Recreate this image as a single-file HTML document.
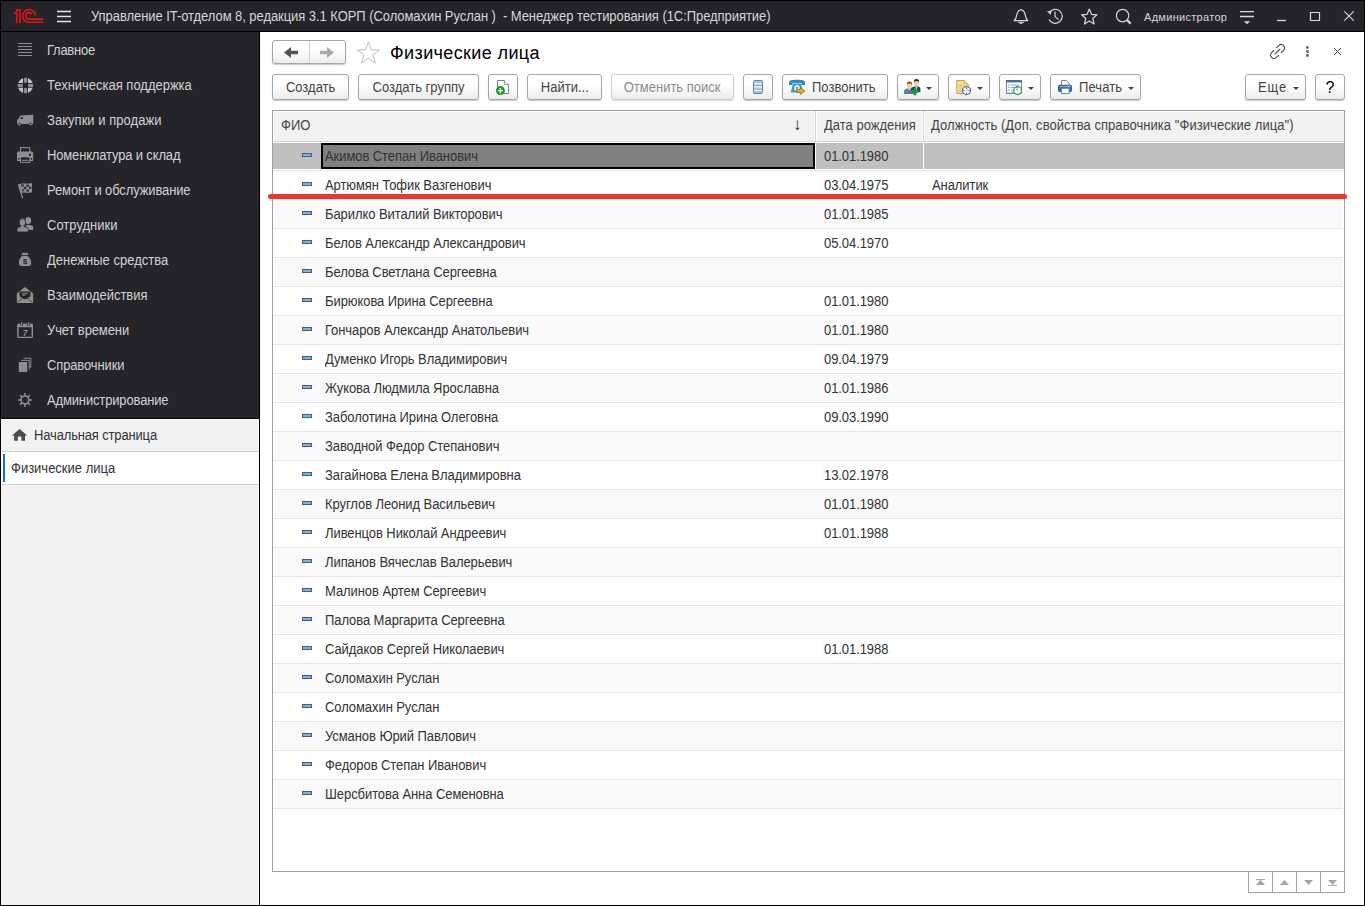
<!DOCTYPE html><html lang="ru"><head><meta charset="utf-8"><title>Физические лица</title><style>*,*::before,*::after{box-sizing:border-box;margin:0;padding:0}
html,body{width:1365px;height:906px;overflow:hidden;background:#fff}
body{font-family:"Liberation Sans",sans-serif;font-size:13px;color:#333;position:relative}
#win{position:absolute;left:0;top:0;width:1365px;height:906px;overflow:hidden}
#win::after{content:"";box-sizing:border-box;position:absolute;left:0;top:0;width:1365px;height:906px;border:1px solid #000;z-index:10}
#win>*{position:absolute}
svg{position:absolute;overflow:visible}
#tb{left:0;top:0;width:1365px;height:32px;background:#242429;border-bottom:1px solid #000;color:#d6d6d6}
#tb span{position:absolute;white-space:pre}
#tb .tt{left:91px;top:8px;font-size:14px;line-height:16px;letter-spacing:-0.065px;transform:scaleX(.9286);transform-origin:0 0}
#tb .adm{left:1144px;top:10px;font-size:11px;line-height:14px;letter-spacing:0.3px}
#sb{left:0;top:32px;width:260px;height:387px;background:#242429;border-right:1px solid #000;border-bottom:1px solid #000}
.mi{position:absolute;left:0;width:259px;height:35px;color:#d2d2d2}
.mi span{position:absolute;left:47px;top:10px;line-height:16px;font-size:14px;white-space:pre;letter-spacing:-0.05px;transform:scaleX(.9286);transform-origin:0 0}
#ow{left:0;top:419px;width:260px;height:487px;background:#f2f2f2;border-right:1px solid #000;box-shadow:inset -1px 1px 0 #fff}
#ow div{position:absolute;left:0;width:259px;height:33px;border-bottom:1px solid #d4d4d4}
#ow .o1{top:0}
#ow .o2{top:33px;background:#fff}
#ow span{position:absolute;top:8px;font-size:14px;line-height:16px;white-space:pre;color:#333;transform:scaleX(.9286);transform-origin:0 0}
#ow .o1 span{left:34px;letter-spacing:-0.17px}
#ow .o2 span{left:11px}
#ow .o2 i{position:absolute;left:3px;top:2px;width:2px;height:28px;background:#1976d2}
#ct{left:0;top:0;width:1365px;height:906px}
#ct>*{position:absolute}
.nav{left:272px;top:40px;width:74px;height:24px;border:1px solid #a6a6a6;border-radius:3px;background:linear-gradient(#fff 40%,#ececec);box-shadow:0 1px 1px rgba(0,0,0,.22)}
.nb{position:absolute;top:0;height:22px}
.nb.l{left:0;width:37px;border-right:1px solid #d0d0d0}
.nb.r{left:37px;width:35px}
h1{left:390px;top:42px;font-size:18px;line-height:22px;font-weight:normal;color:#000;white-space:pre;letter-spacing:0.38px}
.btn{top:74px;height:26px;border:1px solid #a6a6a6;border-radius:3px;background:linear-gradient(#fff 40%,#ececec);box-shadow:0 1px 1px rgba(0,0,0,.22);color:#444;white-space:pre;text-align:center}
.btn span{position:relative;display:inline-block;top:0;line-height:24px;font-size:14px;transform:scaleX(.9286)}
.btn.dis{border-color:#cdcdcd;color:#8c8c8c;box-shadow:0 1px 1px rgba(0,0,0,.14)}
.btn .dd{position:absolute;right:6px;top:12px;width:0;height:0;border-left:3.3px solid transparent;border-right:3.3px solid transparent;border-top:3.4px solid #444}
.btn .q{font-size:16px;color:#000;transform:none;top:1px}
#tbl{left:272px;top:110px;width:1073px;height:762px;border:1px solid #a0a0a0;background:#fff;overflow:hidden}
.th{position:absolute;left:0;top:0;width:1071px;height:31px;background:#f2f2f2;border-bottom:1px solid #d6d6d6;color:#444;box-shadow:inset 1px 1px 0 #fff}
.th span{position:absolute;top:6px;font-size:14px;line-height:16px;white-space:pre;transform:scaleX(.9286);transform-origin:0 0}
.th i{position:absolute;top:0;height:30px;width:3px;background:linear-gradient(90deg,#fff 1px,#d8d8d8 1px,#d8d8d8 2px,#fff 2px)}
.tr{position:absolute;left:0;width:1070px;height:29px;border-bottom:1px solid #e5e5e5}
.tr.alt{background:#fafafa}
.tr.sel::before{content:"";position:absolute;left:0;top:1px;width:1071px;height:26px;background:linear-gradient(90deg,#c0c0c0 542px,#fff 542px,#fff 543.2px,#c0c0c0 543.2px,#c0c0c0 650px,#fff 650px,#fff 651.4px,#c0c0c0 651.4px)}
.tr span{position:absolute;top:6px;font-size:14px;line-height:16px;white-space:pre;color:#333;letter-spacing:-0.08px;transform:scaleX(.9286);transform-origin:0 0}
.tr .c1{left:52px}
.tr .c2{left:551px}
.tr .c3{left:659px}
.tr .ic{position:absolute;left:29px;top:11px;width:10px;height:4px;background:#86b0d6;border:1px solid #3a6088}
.tr .bx{position:absolute;left:48px;top:1px;width:494px;height:26px;border:2px solid #000;background:#808080}
#scr{left:1248px;top:871px;width:97px;height:22px;border:1px solid #a0a0a0;background:#fff}
#red{left:268px;top:194px;width:1079px;height:5px;border-radius:3px;background:#e5392f}
.th .sa{font-size:17px;top:6px;color:#222;font-weight:bold;transform:none}
</style></head><body>
<div id="win">
<div id="tb"><svg style="left:0;top:0" width="80" height="32" viewBox="0 0 80 32"><g fill="none" stroke="#e3131b" stroke-width="1.7"><path d="M35.33 15.35A6.35 6.35 0 1 0 29 22.25H43.2"/><path d="M31.83 14.4A3.2 3.2 0 1 0 29 19.1H43.2"/><path d="M16.75 9.2V23.2M20 9.2V23.2" stroke-width="1.6"/><path d="M13.9 13.2H16.8"/><path d="M16 9.7H20.8" stroke-width="1.4"/></g></svg><svg style="left:0;top:0" width="80" height="32" viewBox="0 0 80 32"><g stroke="#e2e2e2" stroke-width="1.4"><path d="M57 11.5H71M57 16.5H71M57 21.5H71"/></g></svg><span class="tt">Управление IT-отделом 8, редакция 3.1 КОРП (Соломахин Руслан )&nbsp; - Менеджер тестирования (1С:Предприятие)</span><svg style="left:1000px;top:0" width="365" height="32" viewBox="1000 0 365 32"><g fill="none" stroke="#d9d9d9" stroke-width="1.2" stroke-linejoin="round">
<path d="M1014.2 20.6H1027.8C1025 18.5 1025.6 14.5 1024.4 12.3C1023.6 10.8 1022.6 10.2 1021.8 10.1A0.9 0.9 0 0 0 1020.2 10.1C1019.4 10.2 1018.4 10.8 1017.6 12.3C1016.4 14.5 1017 18.5 1014.2 20.6Z"/>
<path d="M1018.2 22.3H1023.8L1021 23.8Z" fill="#d9d9d9" stroke-width="0.6"/>
<path d="M1049.3 12.6A7 7 0 1 1 1049 19.4"/><path d="M1047 11.3L1050.6 14.8L1051.6 10.8Z" fill="#d9d9d9" stroke="none"/><path d="M1055 11.5V16.6L1058.6 19.6"/>
<path d="M1089.3 9L1091.5 14.3L1097 14.8L1092.8 18.5L1094.1 24L1089.3 21L1084.5 24L1085.8 18.5L1081.6 14.8L1087.1 14.3Z"/>
<circle cx="1122.6" cy="15.6" r="6.2"/><path d="M1127.2 20.2L1130.6 23.6" stroke-width="2.2"/>
<path d="M1240 11.6H1254M1240 16.5H1254" stroke-width="1.3"/><path d="M1243.8 21.2H1250.2L1247 24.2Z" fill="#d9d9d9" stroke="none"/>
<path d="M1277 20.5H1286" stroke-width="1.3"/>
<rect x="1310.5" y="12.5" width="9" height="8"/>
<path d="M1344.3 11.3L1353.7 20.7M1353.7 11.3L1344.3 20.7"/>
</g></svg><span class="adm">Администратор</span></div>
<div id="sb">
<div class="mi" style="top:0px"><svg style="left:17px;top:9px" width="17" height="17" viewBox="0 0 17 17"><g fill="#8e8e8e"><rect x="1" y="2" width="14" height="1"/><rect x="1" y="5" width="14" height="1"/><rect x="1" y="8" width="14" height="1"/><rect x="1" y="11" width="14" height="1"/><rect x="1" y="14" width="14" height="1"/></g></svg><span style="letter-spacing:-0.28px">Главное</span></div>
<div class="mi" style="top:35px"><svg style="left:17px;top:9px" width="17" height="17" viewBox="0 0 17 17"><circle cx="8.45" cy="9.45" r="5.25" fill="none" stroke="#c2c2c2" stroke-width="4.9"/><path d="M8.45 1.5V17.4M0.5 9.45H16.4" stroke="#242429" stroke-width="4.8"/><g fill="#8e8e8e"><rect x="6.95" y="1.8" width="3" height="4.9"/><rect x="6.95" y="12.2" width="3" height="4.9"/><rect x="0.8" y="7.95" width="4.9" height="3"/><rect x="11.2" y="7.95" width="4.9" height="3"/></g></svg><span style="letter-spacing:-0.01px">Техническая поддержка</span></div>
<div class="mi" style="top:70px"><svg style="left:17px;top:9px" width="17" height="17" viewBox="0 0 17 17"><path fill="#8f8f8f" d="M0 13V9.4L3.6 4.6L16.2 3.8V13Z"/><path fill="#242429" d="M2.7 7.8L4.3 5.9H6V7.8Z"/><circle cx="2.4" cy="13.3" r="1.5" fill="#8f8f8f" stroke="#242429" stroke-width="0.7"/><circle cx="13.5" cy="13.3" r="1.5" fill="#8f8f8f" stroke="#242429" stroke-width="0.7"/></svg><span style="letter-spacing:0.04px">Закупки и продажи</span></div>
<div class="mi" style="top:105px"><svg style="left:17px;top:9px" width="17" height="17" viewBox="0 0 17 17"><rect x="3.5" y="1.6" width="9.3" height="5" fill="none" stroke="#8f8f8f" stroke-width="1.1"/><path fill="#8f8f8f" d="M1 5.4H15L16.2 6.6V15H0V6.6Z"/><rect x="2.9" y="10.6" width="10.5" height="6.2" fill="#8f8f8f"/><rect x="4" y="11.4" width="8.3" height="4.4" fill="#242429"/><rect x="5" y="13.8" width="6.4" height="1" fill="#8f8f8f"/><rect x="11.9" y="7.9" width="2" height="2" fill="#242429"/><rect x="1" y="12.1" width="1.6" height="1.6" fill="#242429"/><rect x="13.6" y="12.1" width="1.6" height="1.6" fill="#242429"/></svg><span style="letter-spacing:-0.17px">Номенклатура и склад</span></div>
<div class="mi" style="top:140px"><svg style="left:17px;top:9px" width="17" height="17" viewBox="0 0 17 17"><path d="M1.3 3.2L5.6 17" stroke="#8f8f8f" stroke-width="1.2" fill="none"/><path fill="#8f8f8f" d="M1.8 3.4C5 1.2 9 3.6 15 1.9V11.2C10 13 6.5 10.2 4.4 12.2Z"/><g fill="#242429" opacity="0.8"><rect x="4.2" y="3.3" width="2.6" height="2.4"/><rect x="9.4" y="3.6" width="2.6" height="2.4"/><rect x="6.8" y="5.8" width="2.6" height="2.4"/><rect x="12" y="5.6" width="2.4" height="2.4"/><rect x="5" y="8.2" width="2.2" height="2"/><rect x="9.4" y="8.4" width="2.6" height="2.4"/></g></svg><span style="letter-spacing:-0.13px">Ремонт и обслуживание</span></div>
<div class="mi" style="top:175px"><svg style="left:17px;top:9px" width="17" height="17" viewBox="0 0 17 17"><g fill="#8f8f8f"><ellipse cx="11.2" cy="4.5" rx="2.9" ry="3.6"/><path d="M9 14V10.6C9 9.4 10.2 8.8 11.2 8.8C13.8 8.8 16.2 9.6 16.2 11.4V14Z"/><g stroke="#242429" stroke-width="0.8"><ellipse cx="5.4" cy="6.4" rx="3.2" ry="3.9"/><path d="M0 16V13.4C0 11.6 2.6 10.8 4.2 10.6H6.8C8.6 10.8 11.4 11.6 11.4 13.4V16Z"/></g><rect x="4.1" y="9.6" width="2.7" height="2"/></g></svg><span style="letter-spacing:0.01px">Сотрудники</span></div>
<div class="mi" style="top:210px"><svg style="left:17px;top:9px" width="17" height="17" viewBox="0 0 17 17"><rect x="4.9" y="1.9" width="6.2" height="2" fill="#8f8f8f"/><path fill="#8f8f8f" d="M5.8 4.8H10.3C12.6 6.2 14.2 8.8 14.2 11.8C14.2 13.8 13.4 15 11.8 15H4.2C2.6 15 1.8 13.8 1.8 11.8C1.8 8.8 3.4 6 5.3 4.4Z"/><text x="8" y="13.2" font-family="Liberation Sans,sans-serif" font-size="7.5" font-weight="bold" text-anchor="middle" fill="#242429">$</text></svg><span style="letter-spacing:0.01px">Денежные средства</span></div>
<div class="mi" style="top:245px"><svg style="left:17px;top:9px" width="17" height="17" viewBox="0 0 17 17"><path fill="#8f8f8f" d="M-0.2 7.4L8 1L16.2 7.4V16.2C16.2 16.7 15.9 17 15.4 17H0.6C0.1 17-0.2 16.7-0.2 16.2Z"/><path fill="#242429" d="M2.6 5.6H13.4V10.6L8 13.6L2.6 10.6Z"/><rect x="5" y="6.8" width="6" height="1" fill="#8f8f8f"/><rect x="5" y="8.6" width="3.6" height="1" fill="#8f8f8f"/><path d="M0.6 16.2L6.6 11.8M15.4 16.2L9.4 11.8" stroke="#242429" stroke-width="0.7" fill="none"/></svg><span style="letter-spacing:-0.02px">Взаимодействия</span></div>
<div class="mi" style="top:280px"><svg style="left:17px;top:9px" width="17" height="17" viewBox="0 0 17 17"><rect x="0.9" y="3.2" width="14.4" height="13.2" rx="1" fill="none" stroke="#8f8f8f" stroke-width="1.4"/><rect x="0.9" y="3.2" width="14.4" height="3" fill="#8f8f8f"/><path d="M4.6 1.2V4.8M11.6 1.2V4.8" stroke="#242429" stroke-width="2.6"/><path d="M4.6 1.2V4.6M11.6 1.2V4.6" stroke="#8f8f8f" stroke-width="1.2"/><text x="8.1" y="14.8" font-family="Liberation Sans,sans-serif" font-size="8.5" font-weight="bold" font-style="italic" text-anchor="middle" fill="#8f8f8f">7</text></svg><span style="letter-spacing:-0.12px">Учет времени</span></div>
<div class="mi" style="top:315px"><svg style="left:17px;top:9px" width="17" height="17" viewBox="0 0 17 17"><rect x="1.8" y="6" width="8.4" height="10" fill="#8f8f8f"/><path d="M4.2 4.4H12.2V13.6M6.4 2.2H13.8V11.8" fill="none" stroke="#8f8f8f" stroke-width="1"/></svg><span style="letter-spacing:-0.14px">Справочники</span></div>
<div class="mi" style="top:350px"><svg style="left:17px;top:9px" width="17" height="17" viewBox="0 0 17 17"><circle cx="7.9" cy="8.9" r="3.9" fill="none" stroke="#8f8f8f" stroke-width="1.7"/><path d="M12.10 8.90L14.90 8.90M10.87 11.87L12.85 13.85M7.90 13.10L7.90 15.90M4.93 11.87L2.95 13.85M3.70 8.90L0.90 8.90M4.93 5.93L2.95 3.95M7.90 4.70L7.90 1.90M10.87 5.93L12.85 3.95" stroke="#8f8f8f" stroke-width="1.5"/></svg><span style="letter-spacing:-0.16px">Администрирование</span></div>
</div>
<div id="ow"><div class="o1"><svg style="left:12px;top:10px" width="16" height="13" viewBox="0 0 16 13"><path fill="#4a4a4a" d="M7.6 0L15.2 6.6H13V11.8H9.4V7.6H5.8V11.8H2.2V6.6H0Z"/></svg><span>Начальная страница</span></div><div class="o2"><i></i><span>Физические лица</span></div></div>
<div id="ct">
<div class="nav"><div class="nb l"></div><div class="nb r"></div></div>
<svg style="left:280px;top:44px" width="24" height="18" viewBox="280 44 24 18"><path fill="#555" d="M284 52.5L291 47V50.8H298V54.2H291V58Z"/></svg><svg style="left:316px;top:44px" width="24" height="18" viewBox="316 44 24 18"><path fill="#a8a8a8" d="M334 52.5L327 47V50.8H320V54.2H327V58Z"/></svg>
<svg style="left:355px;top:40px" width="28" height="26" viewBox="355 40 28 26"><path fill="none" stroke="#b4c0ca" stroke-width="1" stroke-linejoin="miter" d="M368.40 41.80L371.16 49.80L379.62 49.95L372.87 55.05L375.34 63.15L368.40 58.30L361.46 63.15L363.93 55.05L357.18 49.95L365.64 49.80Z"/></svg>
<h1>Физические лица</h1>
<svg style="left:1265px;top:40px" width="85" height="24" viewBox="1265 40 85 24"><g transform="translate(1277.5 51.5) rotate(-45)" fill="none" stroke="#555" stroke-width="1.2" stroke-linecap="round"><path d="M2 -3.4H5A3.4 3.4 0 0 1 5 3.4H2M-2 -3.4H-5A3.4 3.4 0 0 0 -5 3.4H-2M-3.2 0H3.3"/></g><g fill="#666"><circle cx="1307.4" cy="47.5" r="1.45"/><circle cx="1307.4" cy="51.5" r="1.45"/><circle cx="1307.4" cy="55.5" r="1.45"/></g><path d="M1334 48L1341 55M1341 48L1334 55" stroke="#444" stroke-width="0.95" fill="none"/></svg>
<div class="btn " style="left:272px;width:77px"><span>Создать</span></div>
<div class="btn " style="left:358px;width:121px"><span>Создать группу</span></div>
<div class="btn " style="left:488px;width:30px"></div>
<svg style="left:494px;top:78px" width="20" height="20" viewBox="494 78 20 20"><path d="M497.5 80.5H504.5L508.5 84.5V93.5H497.5Z" fill="#fff" stroke="#6d849c"/><path d="M504.5 80.5V84.5H508.5" fill="#f4f7fa" stroke="#8ea4bc"/><circle cx="500.4" cy="90.6" r="4.5" fill="#1a981f"/><path d="M497.8 90.6H503M500.4 88V93.2" stroke="#fff" stroke-width="1.4"/></svg>
<div class="btn " style="left:527px;width:75px"><span>Найти...</span></div>
<div class="btn dis" style="left:611px;width:123px"><span>Отменить поиск</span></div>
<div class="btn " style="left:743px;width:30px"></div>
<svg style="left:750px;top:78px" width="16" height="18" viewBox="750 78 16 18"><rect x="753.5" y="80.5" width="9" height="13" rx="1" fill="#b9d0e4" stroke="#5c86ae"/><path d="M754 83.5H762M754 87H762M754 90.5H762" stroke="#f2f7fb" stroke-width="0.9"/><path d="M754 82H762M754 85.5H762M754 89H762M754 92.2H762" stroke="#8fb3d3" stroke-width="1.2" opacity="0.8"/></svg>
<div class="btn " style="left:782px;width:106px"><span style="position:absolute;left:28.5px;top:0;transform-origin:0 0">Позвонить</span></div>
<svg style="left:786px;top:78px" width="22" height="20" viewBox="786 78 22 20"><path fill="#2f8cc4" d="M789 82.5C789 80.6 791 79.8 797 79.8S805 80.6 805 82.5V85H801.5V83H792.5V85H789Z"/><path fill="#3b98cf" d="M793 83.4H801L803.3 92.6H790.7Z"/><circle cx="797" cy="88" r="2.9" fill="#e8f2f9"/><circle cx="797" cy="88" r="1.1" fill="#4a7fae"/><path fill="#f3ae1d" stroke="#8a5a08" stroke-width="0.7" d="M796.6 89.6H800.2V87.6L805 91L800.2 94.5V92.4H796.6Z"/></svg>
<div class="btn " style="left:897px;width:42px"><b class="dd"></b></div>
<svg style="left:902px;top:77px" width="22" height="20" viewBox="902 77 22 20"><path fill="#5a7ea8" d="M904 94V91.5C904 89.6 906 89 908 88.6H911C913 89 915 89.6 915 91.5V94Z"/><path fill="#e8eef4" d="M908.4 88.8L909.5 93.8L910.6 88.8Z"/><path fill="#d8432c" d="M909.1 89.6H909.9L910.2 93L909.5 94L908.8 93Z"/><ellipse cx="909.5" cy="85.6" rx="2.5" ry="3" fill="#f3cf9e"/><path fill="#7a4a22" d="M906.9 85C906.7 82.6 908 81.6 909.5 81.6S912.3 82.6 912.1 85C911.4 83.8 910.6 83.5 909.5 83.5S907.6 83.8 906.9 85Z"/><path fill="#2c3e66" d="M911 92V89.3C911 87.6 913 87 915 86.6H918C919.8 87 920.4 87.6 920.4 89.3V92Z"/><path fill="#e8eef4" d="M915.5 86.8L916.5 91L917.5 86.8Z"/><ellipse cx="916.5" cy="83.2" rx="2.5" ry="3" fill="#f3cf9e"/><path fill="#1e2430" d="M913.9 82.8C913.7 80 915 79 916.5 79S919.3 80 919.1 82.8C918.4 81.5 917.6 81.1 916.5 81.1S914.6 81.5 913.9 82.8Z"/><path d="M911.2 91.4H918.8M915 87.6V95.2" stroke="#0f9a3a" stroke-width="2.6"/></svg>
<div class="btn " style="left:948px;width:42px"><b class="dd"></b></div>
<svg style="left:954px;top:78px" width="22" height="20" viewBox="954 78 22 20"><path d="M956.8 80.5H964.5L968.2 84.2V93.5H956.8Z" fill="#f3dc9a" stroke="#caa14a"/><path d="M964.5 80.5V84.2H968.2" fill="#faeec6" stroke="#caa14a" stroke-width="0.8"/><path d="M958.8 85.5H962.5M958.8 88H961.5M958.8 90.5H961" stroke="#d2b467" stroke-width="0.9"/><circle cx="966.5" cy="90.6" r="4" fill="#fff" stroke="#3f7bbd" stroke-width="1.2"/><g fill="#e02020"><rect x="966" y="87.6" width="1" height="1.2"/><rect x="966" y="92.4" width="1" height="1.2"/><rect x="963.4" y="90.1" width="1.2" height="1"/><rect x="968.4" y="90.1" width="1.2" height="1"/></g><path d="M966.5 90.6L968 88.6" stroke="#7fa6d0" stroke-width="0.8"/></svg>
<div class="btn " style="left:999px;width:42px"><b class="dd"></b></div>
<svg style="left:1004px;top:78px" width="22" height="20" viewBox="1004 78 22 20"><rect x="1006.5" y="80.5" width="15" height="13" fill="#fff" stroke="#7087a3"/><rect x="1006" y="80" width="16" height="2.4" fill="#536b8c"/><g stroke="#6fa0dc" stroke-width="0.9"><path d="M1011 85H1019M1011 87.5H1019M1011 90H1015M1011 92.2H1014"/></g><g fill="#4b86d0"><rect x="1008.4" y="84.5" width="1.2" height="1"/><rect x="1008.4" y="87" width="1.2" height="1"/><rect x="1008.4" y="89.5" width="1.2" height="1"/><rect x="1008.4" y="91.7" width="1.2" height="1"/></g><circle cx="1017.7" cy="90.6" r="3.9" fill="#fff" stroke="#3f9a52" stroke-width="1.3"/><path d="M1015.4 87.4L1017.9 86.2L1017.6 88.8Z" fill="#3f9a52"/><path d="M1017.7 90.8L1016.2 88.9" stroke="#667" stroke-width="0.8"/></svg>
<div class="btn " style="left:1050px;width:91px"><span style="position:absolute;left:28px;top:0;letter-spacing:0.1px;transform-origin:0 0">Печать</span><b class="dd"></b></div>
<svg style="left:1056px;top:78px" width="20" height="20" viewBox="1056 78 20 20"><path d="M1061.5 85V80.5H1066.5L1069 83V85" fill="#fff" stroke="#6a87a8"/><rect x="1058" y="84.8" width="14" height="7.2" rx="1.6" fill="#3c6795"/><path d="M1059.5 86.6H1070.5" stroke="#9fbbd6" stroke-width="0.9"/><rect x="1068.2" y="85.8" width="1.3" height="1" fill="#fff"/><rect x="1061.5" y="88.3" width="7.6" height="5.2" fill="#fff" stroke="#6a87a8"/></svg>
<div class="btn " style="left:1245px;width:61px"><span style="position:absolute;left:12px;top:0;letter-spacing:0.9px;transform-origin:0 0">Еще</span><b class="dd"></b></div>
<div class="btn " style="left:1315px;width:30px"><span class="q">?</span></div>
<div id="tbl">
<div class="th"><span style="left:8px">ФИО</span><span style="left:520px" class="sa">↓</span><i style="left:541px"></i><span style="left:551px">Дата рождения</span><i style="left:649px"></i><span style="left:658px;letter-spacing:0.06px">Должность (Доп. свойства справочника "Физические лица")</span></div>
<div class="tr sel" style="top:31px"><b class="ic"></b><i class="bx"></i><span class="c1">Акимов Степан Иванович</span><span class="c2">01.01.1980</span><span class="c3"></span></div>
<div class="tr" style="top:60px"><b class="ic"></b><span class="c1">Артюмян Тофик Вазгенович</span><span class="c2">03.04.1975</span><span class="c3">Аналитик</span></div>
<div class="tr alt" style="top:89px"><b class="ic"></b><span class="c1">Барилко Виталий Викторович</span><span class="c2">01.01.1985</span><span class="c3"></span></div>
<div class="tr" style="top:118px"><b class="ic"></b><span class="c1">Белов Александр Александрович</span><span class="c2">05.04.1970</span><span class="c3"></span></div>
<div class="tr alt" style="top:147px"><b class="ic"></b><span class="c1">Белова Светлана Сергеевна</span><span class="c2"></span><span class="c3"></span></div>
<div class="tr" style="top:176px"><b class="ic"></b><span class="c1">Бирюкова Ирина Сергеевна</span><span class="c2">01.01.1980</span><span class="c3"></span></div>
<div class="tr alt" style="top:205px"><b class="ic"></b><span class="c1">Гончаров Александр Анатольевич</span><span class="c2">01.01.1980</span><span class="c3"></span></div>
<div class="tr" style="top:234px"><b class="ic"></b><span class="c1">Думенко Игорь Владимирович</span><span class="c2">09.04.1979</span><span class="c3"></span></div>
<div class="tr alt" style="top:263px"><b class="ic"></b><span class="c1">Жукова Людмила Ярославна</span><span class="c2">01.01.1986</span><span class="c3"></span></div>
<div class="tr" style="top:292px"><b class="ic"></b><span class="c1">Заболотина Ирина Олеговна</span><span class="c2">09.03.1990</span><span class="c3"></span></div>
<div class="tr alt" style="top:321px"><b class="ic"></b><span class="c1">Заводной Федор Степанович</span><span class="c2"></span><span class="c3"></span></div>
<div class="tr" style="top:350px"><b class="ic"></b><span class="c1">Загайнова Елена Владимировна</span><span class="c2">13.02.1978</span><span class="c3"></span></div>
<div class="tr alt" style="top:379px"><b class="ic"></b><span class="c1">Круглов Леонид Васильевич</span><span class="c2">01.01.1980</span><span class="c3"></span></div>
<div class="tr" style="top:408px"><b class="ic"></b><span class="c1">Ливенцов Николай Андреевич</span><span class="c2">01.01.1988</span><span class="c3"></span></div>
<div class="tr alt" style="top:437px"><b class="ic"></b><span class="c1">Липанов Вячеслав Валерьевич</span><span class="c2"></span><span class="c3"></span></div>
<div class="tr" style="top:466px"><b class="ic"></b><span class="c1">Малинов Артем Сергеевич</span><span class="c2"></span><span class="c3"></span></div>
<div class="tr alt" style="top:495px"><b class="ic"></b><span class="c1">Палова Маргарита Сергеевна</span><span class="c2"></span><span class="c3"></span></div>
<div class="tr" style="top:524px"><b class="ic"></b><span class="c1">Сайдаков Сергей Николаевич</span><span class="c2">01.01.1988</span><span class="c3"></span></div>
<div class="tr alt" style="top:553px"><b class="ic"></b><span class="c1">Соломахин Руслан</span><span class="c2"></span><span class="c3"></span></div>
<div class="tr" style="top:582px"><b class="ic"></b><span class="c1">Соломахин Руслан</span><span class="c2"></span><span class="c3"></span></div>
<div class="tr alt" style="top:611px"><b class="ic"></b><span class="c1">Усманов Юрий Павлович</span><span class="c2"></span><span class="c3"></span></div>
<div class="tr" style="top:640px"><b class="ic"></b><span class="c1">Федоров Степан Иванович</span><span class="c2"></span><span class="c3"></span></div>
<div class="tr alt" style="top:669px"><b class="ic"></b><span class="c1">Шерсбитова Анна Семеновна</span><span class="c2"></span><span class="c3"></span></div>
</div>
<div id="scr"></div>
<svg style="left:1248px;top:871px" width="97" height="22" viewBox="1248 871 97 22"><g stroke="#a0a0a0"><path d="M1272.5 872V892M1296.5 872V892M1320.5 872V892"/></g><g fill="#a6a6a6"><rect x="1256" y="879" width="9" height="1"/><path d="M1260.5 879.8L1265 885H1256Z"/><path d="M1284.5 880L1289 885H1280Z"/><path d="M1304 880H1313L1308.5 885Z"/><path d="M1328 880H1337L1332.5 885Z"/><rect x="1328" y="884.8" width="9" height="1"/></g></svg>
<div id="red"></div>
</div>
</div></body></html>
